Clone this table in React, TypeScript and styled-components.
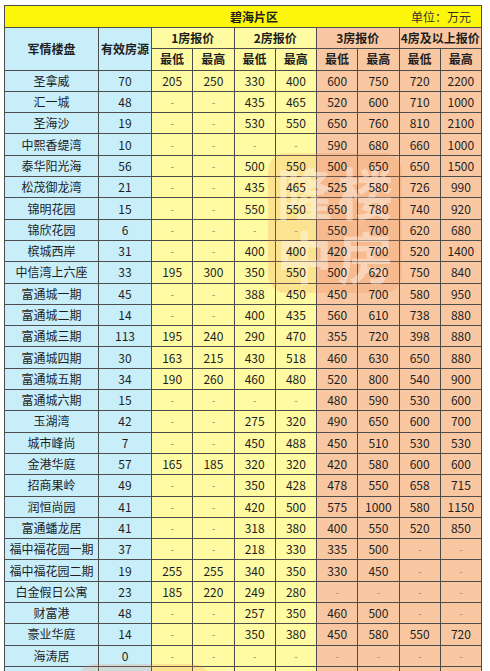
import React from "react";
import styled, { createGlobalStyle } from "styled-components";

const GlobalStyle = createGlobalStyle`
  html, body { margin: 0; padding: 0; background: #ffffff; }
  body {
    padding: 5px 0 0 4px;
    font-family: "Noto Sans CJK SC", "Noto Sans", sans-serif;
    overflow: hidden;
  }
`;

type Tone = "blue" | "yellow" | "orange" | "title";

const tones: Record<Tone, string> = {
  blue: "#c8eefa",
  yellow: "#fffba3",
  orange: "#f9c8a2",
  title: "#fcf70a",
};

const Wrapper = styled.div`
  position: relative;
  width: 478px;
`;

const Grid = styled.div`
  display: grid;
  grid-template-columns: 94px 53px repeat(8, 41.25px);
  grid-template-rows: 22px repeat(31, 21.3px);
  border-top: 1px solid #4d4d4d;
  border-left: 1px solid #4d4d4d;
`;

const Cell = styled.div<{ $tone: Tone; $bold?: boolean; $span?: number; $rows?: number }>`
  background: ${(p) => tones[p.$tone]};
  border-right: 1px solid #4d4d4d;
  border-bottom: 1px solid #4d4d4d;
  display: flex;
  align-items: center;
  justify-content: center;
  font-size: 12px;
  font-weight: ${(p) => (p.$bold ? 700 : 400)};
  color: #1e1e1e;
  white-space: nowrap;
  overflow: hidden;
  line-height: 1;
  ${(p) => (p.$span ? `grid-column: span ${p.$span};` : "")}
  ${(p) => (p.$rows ? `grid-row: span ${p.$rows};` : "")}
`;

const CellText = styled.span<{ $muted?: boolean }>`
  position: relative;
  z-index: 2;
  color: ${(p) => (p.$muted ? "#8a8a8a" : "inherit")};
  font-size: ${(p) => (p.$muted ? "10px" : "inherit")};
`;

const TitleCell = styled.div`
  grid-column: 1 / -1;
  background: ${tones.title};
  border-right: 1px solid #4d4d4d;
  border-bottom: 1px solid #4d4d4d;
  display: grid;
  grid-template-columns: 1fr auto 1fr;
  align-items: center;
  padding-left: 22px;
  font-size: 12px;
  color: #1e1e1e;
`;

const TitleText = styled.span`
  grid-column: 2;
  font-weight: 700;
`;

const UnitText = styled.span`
  grid-column: 3;
  justify-self: end;
  padding-right: 10px;
  color: #333;
`;

const Seal = styled.div<{ $left: number; $top: number }>`
  position: absolute;
  left: ${(p) => p.$left}px;
  top: ${(p) => p.$top}px;
  width: 134px;
  height: 140px;
  border-radius: 18px;
  background: rgba(238, 120, 60, 0.18);
  z-index: 1;
  pointer-events: none;
  display: grid;
  grid-template-columns: 1fr 1fr;
  grid-template-rows: 1fr 1fr;
  place-items: center;
  padding: 6px;
  box-sizing: border-box;
`;

const SealChar = styled.span`
  font-size: 56px;
  font-weight: 700;
  line-height: 1;
  color: rgba(255, 255, 255, 0.38);
`;

type Row = string[];

const rows: Row[] = [
  ["圣拿威", "70", "205", "250", "330", "400", "600", "750", "720", "2200"],
  ["汇一城", "48", "-", "-", "435", "465", "520", "600", "710", "1000"],
  ["圣海沙", "19", "-", "-", "530", "550", "650", "760", "810", "2100"],
  ["中熙香缇湾", "10", "-", "-", "-", "-", "590", "680", "660", "1000"],
  ["泰华阳光海", "56", "-", "-", "500", "550", "500", "650", "650", "1500"],
  ["松茂御龙湾", "21", "-", "-", "435", "465", "525", "580", "726", "990"],
  ["锦明花园", "15", "-", "-", "550", "550", "650", "780", "740", "920"],
  ["锦欣花园", "6", "-", "-", "-", "-", "550", "700", "620", "680"],
  ["槟城西岸", "31", "-", "-", "400", "400", "420", "700", "520", "1400"],
  ["中信湾上六座", "33", "195", "300", "350", "550", "500", "620", "750", "840"],
  ["富通城一期", "45", "-", "-", "388", "450", "450", "700", "580", "950"],
  ["富通城二期", "14", "-", "-", "400", "435", "560", "610", "738", "880"],
  ["富通城三期", "113", "195", "240", "290", "470", "355", "720", "398", "880"],
  ["富通城四期", "30", "163", "215", "430", "518", "460", "630", "650", "880"],
  ["富通城五期", "34", "190", "260", "460", "480", "520", "800", "540", "900"],
  ["富通城六期", "15", "-", "-", "-", "-", "480", "590", "530", "600"],
  ["玉湖湾", "42", "-", "-", "275", "320", "490", "650", "600", "700"],
  ["城市峰尚", "7", "-", "-", "450", "488", "450", "510", "530", "530"],
  ["金港华庭", "57", "165", "185", "320", "320", "420", "580", "600", "600"],
  ["招商果岭", "49", "-", "-", "350", "428", "478", "550", "658", "715"],
  ["润恒尚园", "41", "-", "-", "420", "500", "575", "1000", "580", "1150"],
  ["富通蟠龙居", "41", "-", "-", "318", "380", "400", "550", "520", "850"],
  ["福中福花园一期", "37", "-", "-", "218", "330", "335", "500", "-", "-"],
  ["福中福花园二期", "19", "255", "255", "340", "350", "330", "450", "-", "-"],
  ["白金假日公寓", "23", "185", "220", "249", "280", "-", "-", "-", "-"],
  ["财富港", "48", "-", "-", "257", "350", "460", "500", "-", "-"],
  ["豪业华庭", "14", "-", "-", "350", "380", "450", "580", "550", "720"],
  ["海涛居", "0", "-", "-", "-", "-", "-", "-", "-", "-"],
  ["", "", "", "", "", "", "", "", "", ""],
];

const toneFor = (i: number): Tone => (i < 2 ? "blue" : i < 6 ? "yellow" : "orange");

const groups = ["1房报价", "2房报价", "3房报价", "4房及以上报价"];

export default function App() {
  return (
    <>
      <GlobalStyle />
      <Wrapper>
        <Grid>
          <TitleCell>
            <TitleText>碧海片区</TitleText>
            <UnitText>单位：万元</UnitText>
          </TitleCell>
          <Cell $tone="blue" $bold $rows={2}>
            <CellText>军情楼盘</CellText>
          </Cell>
          <Cell $tone="blue" $bold $rows={2}>
            <CellText>有效房源</CellText>
          </Cell>
          {groups.map((g, i) => (
            <Cell key={g} $tone={i < 2 ? "yellow" : "orange"} $bold $span={2}>
              <CellText>{g}</CellText>
            </Cell>
          ))}
          {groups.flatMap((g, i) =>
            ["最低", "最高"].map((l) => (
              <Cell key={g + l} $tone={i < 2 ? "yellow" : "orange"} $bold>
                <CellText>{l}</CellText>
              </Cell>
            ))
          )}
          {rows.flatMap((r, ri) =>
            r.map((v, ci) => (
              <Cell key={`${ri}-${ci}`} $tone={toneFor(ci)}>
                <CellText $muted={v === "-"}>{v}</CellText>
              </Cell>
            ))
          )}
        </Grid>
        <Seal $left={264} $top={148}>
          <SealChar>隆</SealChar>
          <SealChar>楼</SealChar>
          <SealChar>中</SealChar>
          <SealChar>房</SealChar>
        </Seal>
        <Seal $left={73} $top={659}>
          <SealChar>隆</SealChar>
          <SealChar>楼</SealChar>
          <SealChar>中</SealChar>
          <SealChar>房</SealChar>
        </Seal>
      </Wrapper>
    </>
  );
}
